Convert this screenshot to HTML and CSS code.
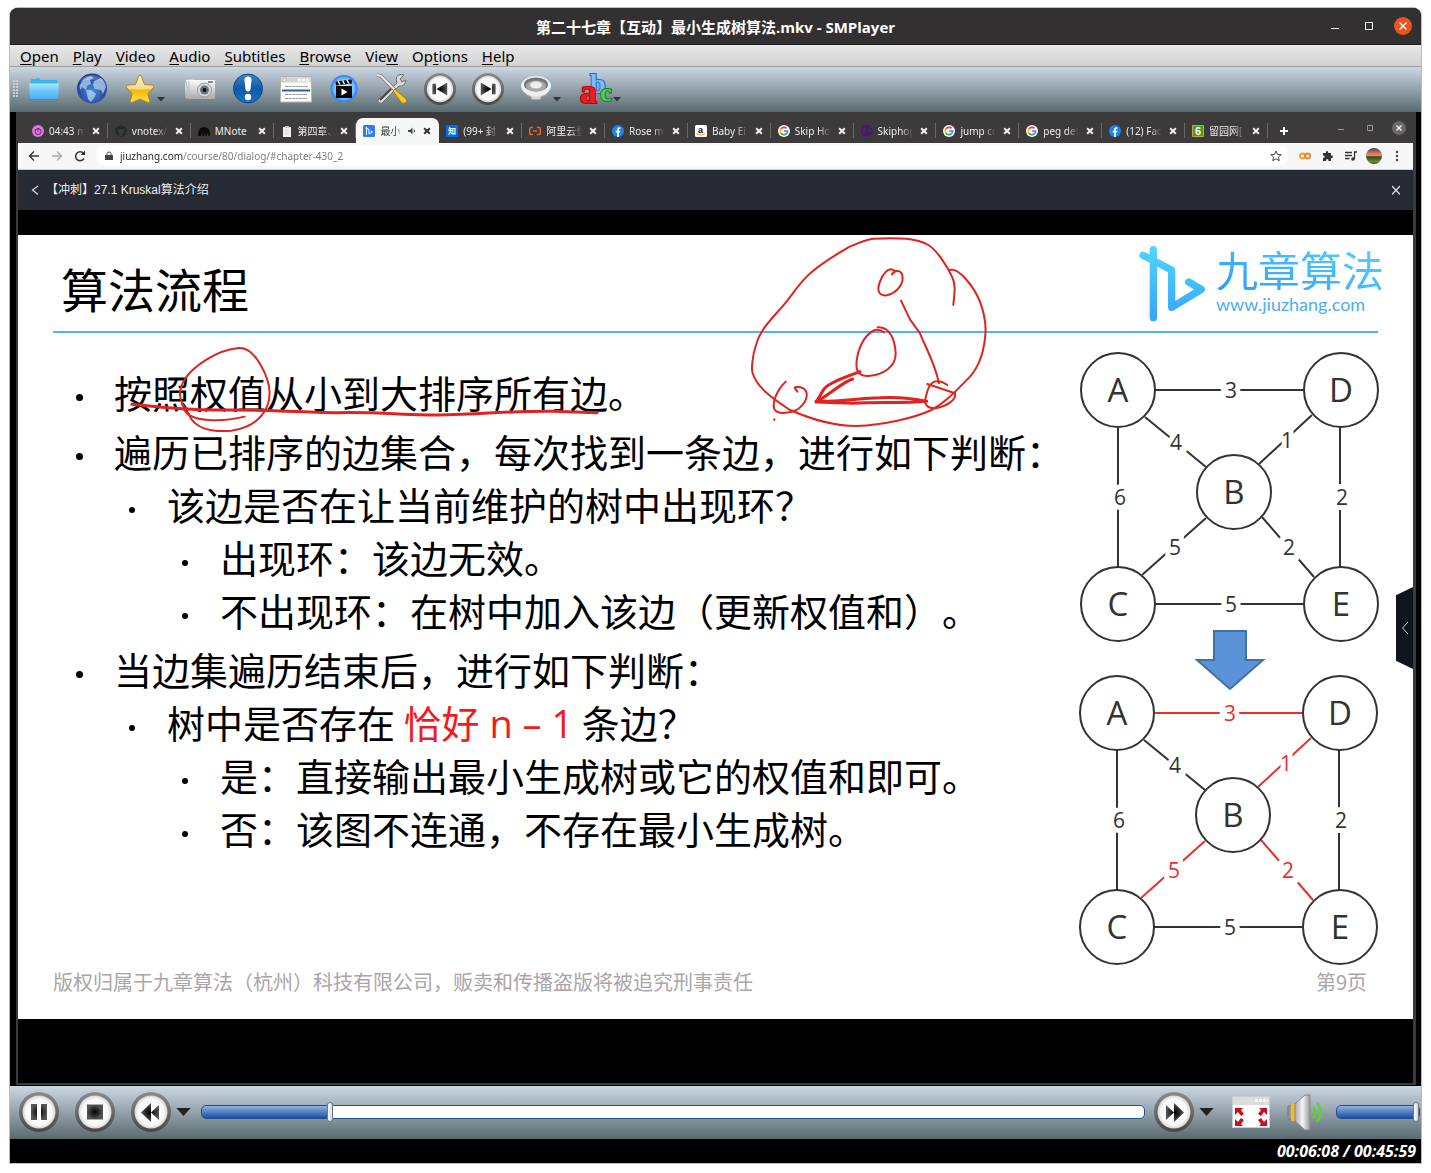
FILE: index.html
```html
<!DOCTYPE html>
<html lang="zh-CN">
<head>
<meta charset="utf-8">
<title>第二十七章【互动】最小生成树算法.mkv - SMPlayer</title>
<link rel="stylesheet" href="styles.css">
</head>
<body>
<svg class="defs" aria-hidden="true">
  <defs>
    <linearGradient id="gFolder" x1="0" y1="0" x2="0" y2="1"><stop offset="0" stop-color="#a9e4ff"/><stop offset=".45" stop-color="#6cc8fb"/><stop offset="1" stop-color="#45abf5"/></linearGradient>
    <radialGradient id="gGlobe" cx=".5" cy=".6" r=".55"><stop offset="0" stop-color="#4c8fd8"/><stop offset="1" stop-color="#223a94"/></radialGradient>
    <linearGradient id="gStar" x1="0" y1="0" x2="0" y2="1"><stop offset="0" stop-color="#fff3cf"/><stop offset=".5" stop-color="#fbd98a"/><stop offset=".55" stop-color="#f2b705"/><stop offset="1" stop-color="#ffe34a"/></linearGradient>
    <linearGradient id="gInfo" x1="0" y1="0" x2="0" y2="1"><stop offset="0" stop-color="#3f86c6"/><stop offset=".5" stop-color="#0d5aa8"/><stop offset="1" stop-color="#1873c4"/></linearGradient>
    <linearGradient id="gMetal" x1="0" y1="0" x2="0" y2="1"><stop offset="0" stop-color="#fff"/><stop offset="1" stop-color="#a9a9a9"/></linearGradient>
    <linearGradient id="gCone" x1="0" y1="0" x2="1" y2="0"><stop offset="0" stop-color="#aaa"/><stop offset=".5" stop-color="#f4f4f4"/><stop offset="1" stop-color="#999"/></linearGradient>
    <linearGradient id="gRing" x1="0" y1="0" x2="0" y2="1"><stop offset="0" stop-color="#8a8a8a"/><stop offset="1" stop-color="#484848"/></linearGradient>
    <radialGradient id="gDisc"><stop offset="0" stop-color="#fff"/><stop offset=".8" stop-color="#f8f8f8"/><stop offset="1" stop-color="#d4d4d4"/></radialGradient>
    <radialGradient id="gInk"><stop offset="0" stop-color="#000"/><stop offset="1" stop-color="#555"/></radialGradient>
    <radialGradient id="gBlue"><stop offset="0" stop-color="#fff"/><stop offset=".75" stop-color="#6db9ff"/><stop offset="1" stop-color="#2a78f0"/></radialGradient>
    <linearGradient id="gLogo" gradientUnits="userSpaceOnUse" x1="0" y1="45" x2="0" y2="270"><stop offset="0" stop-color="#4fd8ff"/><stop offset="1" stop-color="#36a3fb"/></linearGradient>
    <symbol id="round" viewBox="0 0 40 40"><circle cx="20" cy="20" r="20" fill="url(#gRing)"/><circle cx="20" cy="20" r="16.500" fill="url(#gDisc)"/></symbol>
    <symbol id="google" viewBox="0 0 12 12"><circle cx="6" cy="6" r="6" fill="#fff"/><g fill="none" stroke-width="1.700"><path d="M8.600 3.400A3.700 3.700 0 0 0 2.800 4.200" stroke="#ea4335"/><path d="M2.800 4.200A3.700 3.700 0 0 0 2.800 7.800" stroke="#fbbc05"/><path d="M2.800 7.800A3.700 3.700 0 0 0 8.500 8.700" stroke="#34a853"/><path d="M8.500 8.700A3.700 3.700 0 0 0 9.600 6H6" stroke="#4285f4"/></g></symbol>
    <symbol id="facebook" viewBox="0 0 12 12"><circle cx="6" cy="6" r="6" fill="#1b86ee"/><path d="M5.200 12V7.500H3.700V5.800h1.500V4.500C5.200 3 6 2.300 7.300 2.300l1.100.1v1.400h-.7c-.6 0-.8.4-.8.8v1.200h1.500l-.3 1.700H6.900V12z" fill="#fff"/></symbol>
  </defs>
</svg>

<main class="window">
  <header class="titlebar">
    <h1 class="title">第二十七章【互动】最小生成树算法.mkv - SMPlayer</h1>
    <div class="wincontrols">
      <button aria-label="Minimize"><svg width="18" height="18"><path d="M5 11.500h8" stroke="#fff"/></svg></button>
      <button aria-label="Maximize"><svg width="18" height="18"><path d="M5.500 5.500h7v7h-7z" fill="none" stroke="#fff"/></svg></button>
      <button aria-label="Close"><svg width="18" height="18"><circle cx="9" cy="9" r="9" fill="#e95420"/><path d="M5.500 5.500l7 7m0-7l-7 7" stroke="#fff" stroke-width="1.400"/></svg></button>
    </div>
  </header>

  <nav class="menubar">
    <button><u>O</u>pen</button><button><u>P</u>lay</button><button><u>V</u>ideo</button><button><u>A</u>udio</button><button><u>S</u>ubtitles</button><button><u>B</u>rowse</button><button>Vie<u>w</u></button><button>Op<u>t</u>ions</button><button><u>H</u>elp</button>
  </nav>

  <div class="toolbar">
    <span class="grip"></span>
    <button aria-label="Open file"><svg class="ic" viewBox="0 0 32 32"><path d="M3 6h5l1-1h2l1 2h17v6H3z" fill="#35b6ee"/><path d="M1 10.500h30L30 26q0 1-1 1H3q-1 0-1-1z" fill="url(#gFolder)"/><path d="M2 26.500h28" stroke="#2d7fc4" opacity=".6"/></svg></button>
    <button aria-label="Open URL"><svg class="ic" viewBox="0 0 32 32"><circle cx="16" cy="15.500" r="15" fill="url(#gGlobe)"/><path d="M5 10q3-6 10-7l3 2-4 2 1 4-4 2-1 4-4-3-1 3q-3-3 0-7zM10 17l5 0 5 4-2 4-3 4-3-3zM18 8l7-3q4 3 5 9l-3 7-2-4-6-1-2-4z" fill="#b8ddf4" opacity=".7"/><path d="M4 9q3-7 12-7t12 7q-12-5-24 0z" fill="#fff" opacity=".2"/></svg></button>
    <button class="drop" aria-label="Favorites"><svg class="ic" viewBox="0 0 32 32"><path d="M16 2q1 0 2 3l2.500 6.500L28 12q3 .4 1 3l-5 5.500 1.500 7q.5 3-2.500 1.500L16 26l-7 3q-3 1.500-2.500-1.500l1.500-7L3 15q-2-2.600 1-3l7.500-.5L14 5q1-3 2-3z" fill="url(#gStar)" stroke="#b9822a"/></svg><svg class="caret" viewBox="0 0 8 5"><path d="M0 0h8L4 4.500z"/></svg></button>
    <button aria-label="Screenshot"><svg class="ic" viewBox="0 0 32 32"><path d="M2 7q7-1 8 0h20q1 0 1 1v17q0 1-1 1H2q-2-9 0-19z" fill="url(#gMetal)"/><path d="M2 8q3 9 0 17M5 8v17" stroke="#bbb" fill="none"/><path d="M24 8h5v2h-5z" fill="#888"/><circle cx="20.500" cy="17" r="7" fill="#d8d8d8" stroke="#999"/><circle cx="20.500" cy="17" r="4.500" fill="#6b7480"/><circle cx="20.500" cy="17" r="2" fill="#111"/></svg></button>
    <button aria-label="Information"><svg class="ic" viewBox="0 0 32 32"><circle cx="16" cy="15.500" r="14.500" fill="url(#gInfo)" stroke="#0b4a91"/><path d="M12.500 7q0-3.500 3.500-3.500T19.500 7l-1 9.500q-.5 2-2.500 2t-2.500-2z" fill="#fff"/><circle cx="16" cy="24" r="3.200" fill="#fff"/></svg></button>
    <button aria-label="Playlist"><svg class="ic" viewBox="0 0 32 32"><path d="M.5 3.500h31V29H.5z" fill="#fff" stroke="#b5b5b5"/><path d="M1 4h30v5.500H1z" fill="#d6d6d6"/><circle cx="4.500" cy="7" r="2" fill="#eee" stroke="#bbb"/><path d="M18 7h12" stroke="#f5f5f5" stroke-width="3" stroke-dasharray="3 1"/><path d="M5 13.500h23M5 21.500h22M5 25.500h22" stroke="#9a9a9a" stroke-dasharray="3 .5"/><path d="M2 17.500h28" stroke="#2b5fa5" stroke-width="2"/></svg></button>
    <button aria-label="Video browser"><svg class="ic" viewBox="0 0 32 32"><circle cx="16" cy="15.500" r="13.500" fill="url(#gBlue)"/><path d="M8 13h16v12H8zM7.500 8.500l16-2 .5 4-16 2z" fill="#0a0a0a"/><path d="M10 8l2 3.500M14.500 7.500l2 3.500M19 7l2 3.500" stroke="#fff" stroke-width="1.500"/><path d="M13.500 15.500v7l6-3.500z" fill="#fff"/></svg></button>
    <button aria-label="Preferences"><svg class="ic" viewBox="0 0 32 32"><path d="M28 2q-7-2-8 4l1 4L2 27q0 4 4 3L23 13q6 1 7-6l-4 2-2-3z" fill="#d9d9d9" stroke="#6e6e6e"/><path d="M4 27L15 16" stroke="#444" stroke-width="2"/><path d="M1 2l4 1 14 14" fill="none" stroke="#777" stroke-width="3.500"/><path d="M1 2l4 1 14 14" fill="none" stroke="#e9e9e9" stroke-width="2"/><path d="M17 18l2-2 11 10q2 3-1 4t-4-1z" fill="#f7ca1d" stroke="#a87b10"/></svg></button>
    <button aria-label="Previous"><svg class="ic" viewBox="0 0 40 40"><use href="#round"/><path d="M10.500 13.500h4.500v13h-4.500zM29 12v16L15.500 20z" fill="url(#gInk)"/></svg></button>
    <button aria-label="Next"><svg class="ic" viewBox="0 0 40 40"><use href="#round"/><path d="M25 13.500h4.500v13H25zM11 12v16l13.500-8z" fill="url(#gInk)"/></svg></button>
    <button class="drop" aria-label="Audio track"><svg class="ic" viewBox="0 0 32 32"><path d="M3 18q3 5 8 6v2q5 2 10 0v-2q6-1 8-6z" fill="#ddd" stroke="#999"/><ellipse cx="16" cy="13" rx="15" ry="10" fill="#f0f0f0"/><ellipse cx="16" cy="11.500" rx="12" ry="7" fill="#777"/><ellipse cx="16" cy="13" rx="10" ry="5.500" fill="#aaa"/><ellipse cx="16" cy="12" rx="6" ry="3.500" fill="#eee"/></svg><svg class="caret" viewBox="0 0 8 5"><path d="M0 0h8L4 4.500z"/></svg></button>
    <button class="drop" aria-label="Subtitle track"><svg class="ic" viewBox="0 0 32 32"><g class="abc"><text x="10" y="20" fill="#7cbcff" stroke="#2a66c4">b</text><text x="0" y="30" class="a" fill="#ee1c25" stroke="#b8000a">a</text><text x="20" y="28" fill="#4fce5d" stroke="#0f7f22" class="c">c</text></g></svg><svg class="caret" viewBox="0 0 8 5"><path d="M0 0h8L4 4.500z"/></svg></button>
  </div>

  <section class="video">
    <div class="browser">
      <div class="tabstrip">
        <div class="tabs">
          <div class="tab"><svg class="fav" viewBox="0 0 12 12"><circle cx="6" cy="6" r="6" fill="#d878d8"/><circle cx="6" cy="6.500" r="3" fill="none" stroke="#7d1f7d"/><path d="M6 3v3.500" stroke="#7d1f7d"/></svg><a href="#">04:43 m</a><button class="x" aria-label="Close tab"></button></div>
          <div class="tab"><svg class="fav" viewBox="0 0 12 12"><circle cx="6" cy="6" r="5.700" fill="#24292c"/><path d="M4.500 11V9.300Q2.700 8 3 5.500l.2-2 1.500.6h2.600l1.500-.6.2 2Q9.300 8 7.500 9.300V11z" fill="#3c3a3b"/></svg><a href="#">vnotex/</a><button class="x" aria-label="Close tab"></button></div>
          <div class="tab"><svg class="fav" viewBox="0 0 12 12"><path d="M0 10Q0 2 6 2t6 8q-2 2-2 0l-1-3v3q0 1-1.500 1L7 7 6 11H4.500L4 7l-1 4q-2 1-3-1z" fill="#0b0b0b"/></svg><a class="whole" href="#">MNote</a><button class="x" aria-label="Close tab"></button></div>
          <div class="tab"><svg class="fav" viewBox="0 0 12 12"><path d="M2 2h8v10H2z" fill="#f4eeee"/><path d="M4 1h4v2H4z" fill="#d7c5bd"/><path d="M4 5h4M4 7h4M4 9h3" stroke="#d9d2d0" stroke-width=".7"/></svg><a href="#">第四章、</a><button class="x" aria-label="Close tab"></button></div>
          <div class="tab active"><svg class="fav" viewBox="0 0 12 12"><rect width="12" height="12" rx="1.500" fill="#2f7bf0"/><path d="M3.500 2v8M2.500 3l3.500 1.500V9l3.500-2L8 6" fill="none" stroke="#fff"/></svg><a href="#">最小</a><svg class="audio" viewBox="0 0 8 8"><path d="M0 3h2l2.500-2.500v7L2 5H0z" fill="#444"/><path d="M6 2.500q1 1.500 0 3" stroke="#444" fill="none"/></svg><button class="x" aria-label="Close tab"></button></div>
          <div class="tab"><svg class="fav" viewBox="0 0 12 12"><rect width="12" height="12" rx="1" fill="#0a66ea"/><text x="2" y="9" class="favtext">知</text></svg><a href="#">(99+ 封</a><button class="x" aria-label="Close tab"></button></div>
          <div class="tab"><svg class="fav" viewBox="0 0 12 12"><path d="M4 2.500H2Q.7 2.500.7 4v4Q.7 9.500 2 9.500h2M8 2.500h2q1.300 0 1.300 1.500v4q0 1.500-1.300 1.500H8M4 6h4" fill="none" stroke="#e8692a" stroke-width="1.400"/></svg><a href="#">阿里云登</a><button class="x" aria-label="Close tab"></button></div>
          <div class="tab"><svg class="fav"><use href="#facebook"/></svg><a href="#">Rose m</a><button class="x" aria-label="Close tab"></button></div>
          <div class="tab"><svg class="fav" viewBox="0 0 12 12"><rect width="12" height="12" rx="1.500" fill="#fff"/><text x="3" y="8" class="favtext dark">a</text><path d="M2 9q4 2.500 8 0" stroke="#f90" fill="none"/></svg><a href="#">Baby Ei</a><button class="x" aria-label="Close tab"></button></div>
          <div class="tab"><svg class="fav"><use href="#google"/></svg><a href="#">Skip Ho</a><button class="x" aria-label="Close tab"></button></div>
          <div class="tab"><svg class="fav" viewBox="0 0 12 12"><g fill="none" stroke="#4b0f8c" stroke-width="1.500"><circle cx="6" cy="6" r="5"/><path d="M6 1v10M6 6l-3.500 3.500M6 6l3.500 3.500"/></g></svg><a href="#">Skiphop</a><button class="x" aria-label="Close tab"></button></div>
          <div class="tab"><svg class="fav"><use href="#google"/></svg><a href="#">jump co</a><button class="x" aria-label="Close tab"></button></div>
          <div class="tab"><svg class="fav"><use href="#google"/></svg><a href="#">peg def</a><button class="x" aria-label="Close tab"></button></div>
          <div class="tab"><svg class="fav"><use href="#facebook"/></svg><a href="#">(12) Fac</a><button class="x" aria-label="Close tab"></button></div>
          <div class="tab"><svg class="fav" viewBox="0 0 12 12"><path d="M.5.500h11v11H.5z" fill="#4a9a1c" stroke="#c9a24a"/><text x="3" y="10" class="favtext six">6</text></svg><a href="#">留园网[</a><button class="x" aria-label="Close tab"></button></div>
        </div>
        <button class="newtab" aria-label="New tab"></button>
        <div class="innercontrols">
          <button aria-label="Minimize"><svg width="14" height="14"><path d="M4 8.500h6" stroke="#999"/></svg></button>
          <button aria-label="Maximize"><svg width="14" height="14"><path d="M4.500 4.500h5v5h-5z" fill="none" stroke="#999"/></svg></button>
          <button aria-label="Close"><svg width="14" height="14"><circle cx="7" cy="7" r="7" fill="#696867"/><path d="M4.500 4.500l5 5m0-5l-5 5" stroke="#fff" stroke-width="1.200"/></svg></button>
        </div>
      </div>

      <div class="addressbar">
        <button aria-label="Back"><svg width="12" height="12"><path d="M11 6H1.500M6 1.500L1.500 6 6 10.500" fill="none" stroke="#333" stroke-width="1.400"/></svg></button>
        <button aria-label="Forward"><svg width="12" height="12"><path d="M1 6h9.500M6 1.500L10.500 6 6 10.500" fill="none" stroke="#aaa" stroke-width="1.400"/></svg></button>
        <button aria-label="Reload"><svg width="12" height="12"><path d="M10 8.500A4.500 4.500 0 1 1 9.500 3.200" fill="none" stroke="#333" stroke-width="1.500"/><path d="M11 .500V5H6.500z" fill="#333"/></svg></button>
        <div class="omnibox">
          <svg width="8" height="10"><path d="M1 4h6v5H1zM0 4h8v5H0z" fill="#444"/><path d="M2 4V2.500q0-1.500 2-1.500t2 1.500V4" fill="none" stroke="#444"/></svg>
          <input class="url" aria-label="Address" value="jiuzhang.com/course/80/dialog/#chapter-430_2">
          <button aria-label="Bookmark"><svg width="12" height="12"><path d="M6 1l1.500 3.400 3.700.3-2.800 2.400.9 3.600L6 8.800l-3.300 1.900.9-3.600L.8 4.700l3.700-.3z" fill="none" stroke="#444"/></svg></button>
        </div>
        <button aria-label="Colab"><svg width="12" height="12"><circle cx="3.500" cy="6" r="2.500" fill="none" stroke="#f0a030" stroke-width="1.800"/><circle cx="8.700" cy="6" r="2.500" fill="none" stroke="#e8842a" stroke-width="1.800"/></svg></button>
        <button aria-label="Extensions"><svg width="12" height="12"><path d="M1 3h3q-.5-2 1-2t1.300 2H9v2.700q2-.4 2 1t-2 1.200V11H6.500q0-2-1.300-2T4 11H1V8q1.700 0 1.700-1.200T1 5.500z" fill="#333"/></svg></button>
        <button aria-label="Media"><svg width="12" height="12"><path d="M0 2.500h7M0 5.500h7M0 8.500h4.500M9.500 9V2H12" fill="none" stroke="#333" stroke-width="1.300"/><circle cx="8" cy="9" r="1.800" fill="#333"/></svg></button>
        <button class="avatar" aria-label="Profile"></button>
        <button aria-label="Menu"><svg width="12" height="12"><g fill="#444"><circle cx="6" cy="2" r="1.200"/><circle cx="6" cy="6" r="1.200"/><circle cx="6" cy="10" r="1.200"/></g></svg></button>
      </div>

      <div class="coursebar">
        <button class="back" aria-label="Back"><svg width="8" height="10"><path d="M7 1L1.500 5 7 9.500" fill="none" stroke="#ddd" stroke-width="1.200"/></svg></button>
        <h2>【冲刺】27.1 Kruskal算法介绍</h2>
        <button aria-label="Close"><svg width="8" height="10"><path d="M0 1l8 8.500M8 1L0 9.500" stroke="#ddd" stroke-width="1.200"/></svg></button>
      </div>

      <div class="stage">
        <article class="slide">
          <header class="slidehead">
            <h3>算法流程</h3>
            <div class="logo">
              <svg viewBox="205 42 201 231" width="67" height="77"><path d="M248 56V260M217 73l86 44V229l89-54-38-22" fill="none" stroke="url(#gLogo)" stroke-width="22" stroke-linecap="round" stroke-linejoin="round"/></svg>
              <div class="brand"><strong>九章算法</strong><span>www.jiuzhang.com</span></div>
            </div>
          </header>
          <div class="slidebody">
            <ul class="steps">
              <li>按照权值从小到大排序所有边。</li>
              <li>遍历已排序的边集合，每次找到一条边，进行如下判断：
                <ul>
                  <li>该边是否在让当前维护的树中出现环？
                    <ul>
                      <li>出现环：该边无效。</li>
                      <li>不出现环：在树中加入该边（更新权值和）。</li>
                    </ul>
                  </li>
                </ul>
              </li>
              <li>当边集遍历结束后，进行如下判断：
                <ul>
                  <li>树中是否存在 <em>恰好 n – 1</em> 条边？
                    <ul>
                      <li>是：直接输出最小生成树或它的权值和即可。</li>
                      <li>否：该图不连通，不存在最小生成树。</li>
                    </ul>
                  </li>
                </ul>
              </li>
            </ul>
            <svg class="graphs" viewBox="1080 352 298 613" width="298" height="613">
              <g>
                <path class="edge" d="M1155 390H1304M1118 427V567M1340 427V567M1155 604H1304M1145 417L1206 467M1312 415L1259 464M1142 575L1206 518M1262 517L1314 577"/>
                <g class="node"><circle cx="1118" cy="390" r="37"/><circle cx="1341" cy="390" r="37"/><circle cx="1234" cy="492" r="37"/><circle cx="1118" cy="604" r="37"/><circle cx="1341" cy="604" r="37"/></g>
                <g class="name"><text x="1118" y="402">A</text><text x="1341" y="402">D</text><text x="1234" y="504">B</text><text x="1118" y="616">C</text><text x="1341" y="616">E</text></g>
                <g class="weight"><text x="1231" y="398">3</text><text x="1176" y="450">4</text><text x="1287" y="448">1</text><text x="1120" y="505">6</text><text x="1342" y="505">2</text><text x="1175" y="555">5</text><text x="1289" y="555">2</text><text x="1231" y="612">5</text></g>
              </g>
              <path d="M1214 631h32v29h17l-33 29-33-29h17z" fill="#5b93d8" stroke="#41719c" stroke-width="2"/>
              <g transform="translate(-1 323)">
                <path class="edge" d="M1118 427V567M1340 427V567M1155 604H1304M1145 417L1206 467"/>
                <path class="edge picked" d="M1155 390H1304M1312 415L1259 464M1142 575L1206 518M1262 517L1314 577"/>
                <g class="node"><circle cx="1118" cy="390" r="37"/><circle cx="1341" cy="390" r="37"/><circle cx="1234" cy="492" r="37"/><circle cx="1118" cy="604" r="37"/><circle cx="1341" cy="604" r="37"/></g>
                <g class="name"><text x="1118" y="402">A</text><text x="1341" y="402">D</text><text x="1234" y="504">B</text><text x="1118" y="616">C</text><text x="1341" y="616">E</text></g>
                <g class="weight"><text class="red" x="1231" y="398">3</text><text x="1176" y="450">4</text><text class="red" x="1287" y="448">1</text><text x="1120" y="505">6</text><text x="1342" y="505">2</text><text class="red" x="1175" y="555">5</text><text class="red" x="1289" y="555">2</text><text x="1231" y="612">5</text></g>
              </g>
            </svg>
          </div>
          <footer class="slidefoot"><span>版权归属于九章算法（杭州）科技有限公司，贩卖和传播盗版将被追究刑事责任</span><span>第9页</span></footer>
          <svg class="ink" viewBox="18 235 1395 784" aria-hidden="true">
            <g transform="translate(740 230) scale(.3333)">
              <path d="M640 225C644 185 648 165 636 140C620 105 590 60 565 45C530 25 480 22 400 26C370 30 340 46 325 52C280 80 240 100 200 140C170 170 150 205 125 232C90 272 60 300 48 345C36 380 34 420 38 430C50 470 90 500 150 540C220 570 280 588 350 588C430 585 520 565 575 540C620 515 650 480 690 440C725 400 735 350 737 300C735 240 715 190 680 150C660 125 645 115 628 120"/>
              <path d="M456 133C465 120 480 120 486 132C495 160 470 190 440 196C415 198 410 180 420 155C430 130 440 117 455 118L468 124"/>
              <path d="M483 212L510 268 540 310C560 360 585 400 597 460"/>
              <path d="M413 292C450 290 465 330 467 370C468 410 430 435 385 438C350 440 345 415 352 380C360 340 380 310 405 300C415 298 425 302 432 307"/>
              <path d="M137 455C110 480 98 515 102 535C110 555 150 550 170 540C200 520 210 490 190 475C175 468 160 472 165 475L172 485M103 568v2"/>
              <path class="thick" d="M360 425C320 440 260 460 250 480L230 514M338 447C300 460 270 495 230 514"/>
              <path class="thick" d="M228 514C300 516 360 504 420 503C480 500 520 505 560 514C500 520 400 516 340 520L228 516"/>
              <path d="M562 462L645 490C650 510 620 528 590 534C560 538 550 520 558 500C562 480 570 455 590 454C605 452 612 458 622 465"/>
            </g>
            <g transform="translate(40 250) scale(.3827 .3333)">
              <path d="M520 294C560 290 600 380 600 430C600 480 570 530 500 542C440 548 400 530 388 490C360 450 360 420 380 385C400 350 460 300 520 294z"/>
              <path d="M375 475C390 520 480 515 535 500"/>
              <path class="thick" d="M240 463C300 470 380 482 480 480C600 478 700 488 780 488C880 486 960 495 1030 495C1120 494 1250 482 1340 484L1456 488"/>
            </g>
          </svg>
          <button class="drawer" aria-label="Open panel"><svg width="8" height="14"><path d="M7 1L1.500 7 7 13" fill="none" stroke="#ccc"/></svg></button>
        </article>
      </div>
    </div>
  </section>

  <div class="controls">
    <button aria-label="Pause"><svg class="big" viewBox="0 0 40 40"><use href="#round"/><path d="M12 12h6v16h-6zM22 12h6v16h-6z" fill="url(#gInk)"/></svg></button>
    <button aria-label="Stop"><svg class="big" viewBox="0 0 40 40"><use href="#round"/><path d="M12 12.500h16v15H12z" fill="url(#gInk)"/></svg></button>
    <button class="seekbtn" aria-label="Rewind"><svg class="big" viewBox="0 0 40 40"><use href="#round"/><path d="M20 11v19L10 20.500zM28 13v15l-8-7.500z" fill="url(#gInk)"/></svg><svg class="bigcaret" viewBox="0 0 16 9"><path d="M0 0h16L8 9z"/></svg></button>
    <input class="range seek" type="range" min="0" max="2759" value="368" aria-label="Position">
    <button class="seekbtn" aria-label="Forward"><svg class="big" viewBox="0 0 40 40"><use href="#round"/><path d="M20 11v19l10-9.500zM12 13v15l8-7.500z" fill="url(#gInk)"/></svg><svg class="bigcaret" viewBox="0 0 16 9"><path d="M0 0h16L8 9z"/></svg></button>
    <button class="full" aria-label="Fullscreen"><svg width="38" height="32"><path d="M.5.500h37v31H.5z" fill="#fff" stroke="#ccc"/><path d="M1 1h36v8H1z" fill="#dcdcdc"/><path d="M23 4.500h13" stroke="#f4f4f4" stroke-width="3" stroke-dasharray="3 1"/><path d="M3 12h8l-2 2 3 4-3 2-3-4-3 3zM35 12h-8l2 2-3 4 3 2 3-4 3 3zM3 30h8l-2-2 3-4-3-2-3 4-3-3zM35 30h-8l2-2-3-4 3-2 3 4 3-3z" fill="#c8101a"/></svg></button>
    <button class="mute" aria-label="Mute"><svg width="36" height="36"><path d="M1 12h5v13H1z" fill="#999" stroke="#777"/><path d="M4 10h5v17H4z" fill="#f6bd1e"/><path d="M8 10L18 1h5v35h-5L8 27z" fill="url(#gCone)" stroke="#888"/><path d="M26 13q4 5 0 11M30 9q7 9 0 19" fill="none" stroke="#5bd42a" stroke-width="2.400"/></svg></button>
    <input class="range volume" type="range" min="0" max="100" value="100" aria-label="Volume">
  </div>
  <footer class="status">00:06:08 / 00:45:59</footer>
</main>
</body>
</html>
```
FILE: styles.css
```css
* { box-sizing: border-box; }
body {
  margin: 0;
  padding: 8px 10px;
  background: #fff;
  font-family: "Noto Sans", "Noto Sans CJK SC", sans-serif;
}
button {
  margin: 0;
  padding: 0;
  border: 0;
  background: none;
  font: inherit;
  color: inherit;
  display: flex;
  align-items: center;
  justify-content: center;
}
svg { display: block; flex: none; }
h1, h2, h3, ul { margin: 0; padding: 0; font-weight: normal; }
.defs { position: absolute; width: 0; height: 0; }

.window {
  border-radius: 8px 8px 0 0;
  overflow: hidden;
  background: #000;
  box-shadow: 0 0 0 1px #bbb;
}
.titlebar {
  display: grid;
  grid-template-columns: 1fr auto 1fr;
  align-items: center;
  height: 37px;
  padding: 0 9px;
  background: #333031;
  border-bottom: 1px solid #1c1b1b;
}
.title {
  grid-column: 2;
  padding-top: 2px;
  font-size: 15px;
  font-weight: bold;
  line-height: 20px;
  color: #fff;
  font-family: "Open Sans", "Noto Sans CJK SC", sans-serif;
}
.wincontrols { display: flex; gap: 16px; justify-content: flex-end; }

.menubar {
  display: flex;
  gap: 14px;
  height: 22px;
  padding: 0 10px;
  background: linear-gradient(#e8e8e8, #d2d2d2);
  border-bottom: 1px solid #9f9c9a;
  font-size: 15px;
  line-height: 22px;
  color: #000;
}
.menubar u { text-underline-offset: 2px; }
.menubar button { display: block; }

.toolbar {
  display: flex;
  align-items: center;
  height: 45px;
  padding-bottom: 2px;
  background: linear-gradient(#cbd8e4, #5a6a70);
}
.toolbar button { width: 48px; height: 43px; }
.toolbar .drop { width: 60px; padding-left: 8px; justify-content: flex-start; align-items: center; }
.grip {
  width: 6px;
  height: 18px;
  margin: 0 1px 0 3px;
  background: radial-gradient(circle at 1px 1px, #c3ced6 1px, transparent 1px) 0 0 / 3px 3px;
}
.ic { width: 32px; height: 32px; overflow: visible; }
.caret { width: 8px; height: 5px; fill: #333; margin: 22px 0 0 1px; }
.abc { font: bold 28px "Liberation Serif", serif; stroke-width: 2px; paint-order: stroke; }
.abc .a { font-size: 34px; }
.abc .c { font-size: 26px; }

.video { padding: 0 5px 1px 6px; background: #000; }
.browser { padding: 0 3px 2px 2px; background: #3c3a3b; }
.tabstrip { display: flex; align-items: flex-end; height: 31px; padding-left: 7px; }
.tabs { display: flex; flex: 1; min-width: 0; height: 25px; }
.tab {
  flex: 1 1 0;
  min-width: 0;
  display: flex;
  align-items: center;
  gap: 5px;
  padding: 0 6px 0 7px;
  font-size: 10px;
  line-height: 16px;
  color: #eee;
  background: linear-gradient(#6a6868, #6a6868) right center / 1px 15px no-repeat;
}
.tab a {
  flex: 1;
  min-width: 0;
  overflow: hidden;
  white-space: nowrap;
  color: inherit;
  text-decoration: none;
  -webkit-mask-image: linear-gradient(90deg, #000 65%, transparent);
  mask-image: linear-gradient(90deg, #000 65%, transparent);
}
.tab a.whole { -webkit-mask-image: none; mask-image: none; }
.tab.active { background: #f6f7f7; border-radius: 7px 7px 0 0; color: #333; }
.audio { width: 8px; height: 8px; }
.fav { width: 12px; height: 12px; }
.favtext { font: bold 8px "Liberation Sans", "Noto Sans CJK SC", sans-serif; fill: #fff; }
.favtext.dark { font-size: 9px; fill: #111; }
.favtext.six { font-size: 11px; }
.x, .newtab { display: grid; place-items: center; flex: none; width: 12px; height: 12px; }
.x::before, .x::after, .newtab::before, .newtab::after {
  content: "";
  width: 8px;
  height: 2px;
  background: currentColor;
  grid-area: 1 / 1;
}
.x::before { transform: rotate(45deg); }
.x::after { transform: rotate(-45deg); }
.newtab { width: 32px; height: 25px; color: #fff; }
.newtab::after { transform: rotate(90deg); }
.innercontrols {
  display: flex;
  gap: 15px;
  width: 113px;
  height: 31px;
  padding: 0 7px 0 0;
  justify-content: flex-end;
  align-items: center;
}

.addressbar {
  display: flex;
  align-items: center;
  gap: 11px;
  height: 27px;
  padding: 0 10px 1px;
  background: #f6f7f7;
  border-bottom: 1px solid #c9ced1;
}
.omnibox {
  flex: 1;
  display: flex;
  align-items: center;
  gap: 7px;
  height: 21px;
  margin-left: -1px;
  padding: 0 6px 0 9px;
  border-radius: 10px;
  background: #fff;
}
.url {
  flex: 1;
  min-width: 0;
  padding: 0;
  border: 0;
  outline: 0;
  font: 10px/16px "Noto Sans", sans-serif;
  color: transparent;
  background: linear-gradient(90deg, #222 63px, #777 63px);
  -webkit-background-clip: text;
  background-clip: text;
}
.avatar {
  width: 16px;
  height: 16px;
  margin: 0 -2px;
  border-radius: 8px;
  background: linear-gradient(#4a3660, #e07a60 35%, #d9905a 48%, #2d4a20 55%, #6d8a2c 85%, #33401c);
}

.coursebar {
  display: flex;
  align-items: center;
  height: 40px;
  padding: 0 13px;
  background: #262a32;
  color: #eee;
}
.coursebar h2 {
  flex: 1;
  padding-left: 7px;
  font: 12px/18px "Liberation Sans", "Noto Sans CJK SC", sans-serif;
}

.stage { padding: 25px 0 64px; background: #000; }
.slide {
  position: relative;
  padding: 0 35px;
  background: #fff;
  color: #000;
  font-family: "Noto Sans CJK SC", sans-serif;
  text-spacing-trim: space-all;
}
.slidehead {
  display: flex;
  justify-content: space-between;
  align-items: center;
  height: 98px;
  border-bottom: 2px solid #4cb6ee;
}
.slidehead h3 { padding: 10px 0 0 8px; font-size: 47px; line-height: 60px; }
.logo { display: flex; align-items: center; gap: 10px; margin-right: -6px; }
.brand { display: flex; flex-direction: column; }
.brand strong {
  font-size: 42px;
  line-height: 42px;
  font-weight: 400;
  color: transparent;
  background: linear-gradient(20deg, #2f9cf6, #55d3ff);
  -webkit-background-clip: text;
  background-clip: text;
}
.brand span { font: 18px/28px Lato, sans-serif; color: #4aaef0; }

.slidebody { display: flex; justify-content: space-between; align-items: flex-start; padding-top: 19px; }
.steps { padding: 13px 0 0 23px; font-size: 38px; line-height: 53px; }
.steps ul { padding-left: 53px; }
.steps li { list-style: none; }
.steps > li + li { margin-top: 6px; }
.steps li::before {
  content: "";
  display: inline-block;
  width: 7px;
  height: 7px;
  margin-right: 31px;
  border-radius: 50%;
  background: #000;
  vertical-align: middle;
}
.steps ul li::before { width: 6px; height: 6px; margin-right: 32px; }
.steps em { font-style: normal; font-family: "Open Sans", "Noto Sans CJK SC", sans-serif; line-height: 1; color: #ee1c1c; }
.graphs { overflow: visible; }
.edge { fill: none; stroke: #333; stroke-width: 2; }
.edge.picked { stroke: #e5322d; }
.node circle { fill: none; stroke: #333; stroke-width: 2; }
.name { font: 33px "Open Sans", sans-serif; fill: #333; text-anchor: middle; }
.weight { font: 21px "Open Sans", sans-serif; fill: #333; text-anchor: middle; stroke: #fff; stroke-width: 10px; paint-order: stroke; }
.red { fill: #e5322d; }
.slidefoot {
  display: flex;
  justify-content: space-between;
  padding: 0 11px 20px 0;
  font-size: 20px;
  line-height: 34px;
  color: #aaa5a8;
}
.ink {
  position: absolute;
  inset: 0;
  width: 100%;
  height: 100%;
  fill: none;
  stroke: #de2420;
  stroke-linecap: round;
  stroke-linejoin: round;
  pointer-events: none;
}
.ink path { stroke-width: 2px; vector-effect: non-scaling-stroke; }
.ink .thick { stroke-width: 3px; }
.drawer {
  position: absolute;
  right: 0;
  top: 352px;
  width: 17px;
  height: 82px;
  background: #10151d;
  clip-path: polygon(100% 0, 0 10%, 0 90%, 100% 100%);
}

.controls {
  display: flex;
  align-items: center;
  height: 53px;
  padding: 0 1px 2px 9px;
  background: linear-gradient(#cbd8e4, #5a6a70);
}
.big { width: 40px; height: 40px; }
.controls button { margin-right: 16px; }
.controls .seekbtn { gap: 5px; margin-right: 10px; }
.bigcaret { width: 15px; height: 8px; fill: #222; }
.range {
  -webkit-appearance: none;
  appearance: none;
  height: 14px;
  margin: 0;
  border: 1px solid #1c4f9c;
  border-radius: 5px;
  background: linear-gradient(#8db2e6, #1c4f9c) 0 0 / 100% 100% no-repeat, #fff;
}
.range::-webkit-slider-thumb {
  -webkit-appearance: none;
  width: 6px;
  height: 20px;
  border: 1px solid #777;
  border-radius: 3px;
  background: linear-gradient(90deg, #fff, #c6d8f2);
}
.seek { flex: 1; min-width: 0; margin-right: 9px; background-size: 13.5% 100%, auto; }
.volume { width: 84px; }
.controls .full { margin-right: 17px; margin-left: 8px; }
.controls .mute { margin-right: 13px; }
.status {
  height: 24px;
  padding-right: 5px;
  font: italic bold 16px/24px "Open Sans", sans-serif;
  color: #fff;
  text-align: right;
}
```
